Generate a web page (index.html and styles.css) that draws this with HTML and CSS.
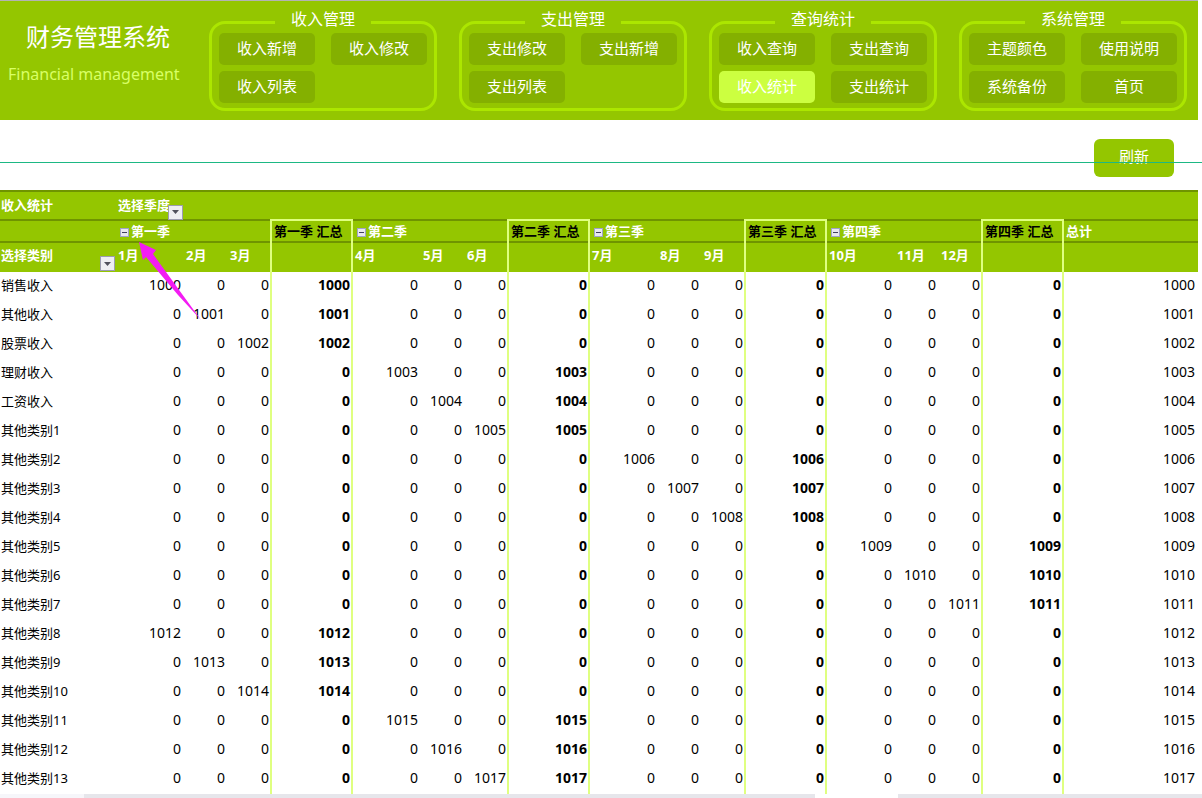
FILE: index.html
```html
<!DOCTYPE html>
<html lang="zh-CN">
<head>
<meta charset="utf-8">
<title>财务管理系统</title>
<link rel="stylesheet" href="styles.css">
</head>
<body>
<header class="banner">
  <div class="brand">
    <h1 class="brand-title">财务管理系统</h1>
    <p class="brand-sub">Financial management</p>
  </div>
  <nav class="menus">
    <fieldset class="menu"><legend>收入管理</legend>
      <button type="button">收入新增</button><button type="button">收入修改</button><button type="button">收入列表</button>
    </fieldset>
    <fieldset class="menu"><legend>支出管理</legend>
      <button type="button">支出修改</button><button type="button">支出新增</button><button type="button">支出列表</button>
    </fieldset>
    <fieldset class="menu"><legend>查询统计</legend>
      <button type="button">收入查询</button><button type="button">支出查询</button><button type="button" class="active">收入统计</button><button type="button">支出统计</button>
    </fieldset>
    <fieldset class="menu"><legend>系统管理</legend>
      <button type="button">主题颜色</button><button type="button">使用说明</button><button type="button">系统备份</button><button type="button">首页</button>
    </fieldset>
  </nav>
</header>
<div class="toolbar">
  <button type="button" class="refresh">刷新</button>
</div>
<main class="sheet">
  <table class="pivot">
    <colgroup>
      <col class="c-name">
      <col class="c-first"><col class="c-month"><col class="c-month"><col class="c-sum">
      <col class="c-first"><col class="c-month"><col class="c-month"><col class="c-sum">
      <col class="c-first"><col class="c-month"><col class="c-month"><col class="c-sum">
      <col class="c-first"><col class="c-month"><col class="c-month"><col class="c-sum">
      <col>
    </colgroup>
    <thead>
      <tr class="h-title">
        <th>收入统计</th>
        <th colspan="17"><span class="pick">选择季度<button type="button" class="drop" aria-label="选择季度"><svg width="7" height="4" viewBox="0 0 7 4"><path d="M0 0h7L3.500 4z"/></svg></button></span></th>
      </tr>
      <tr class="h-quarter">
        <th></th>
        <th colspan="3"><button type="button" class="fold" aria-label="折叠"></button>第一季</th><th class="sum">第一季 汇总</th>
        <th colspan="3"><button type="button" class="fold" aria-label="折叠"></button>第二季</th><th class="sum">第二季 汇总</th>
        <th colspan="3"><button type="button" class="fold" aria-label="折叠"></button>第三季</th><th class="sum">第三季 汇总</th>
        <th colspan="3"><button type="button" class="fold" aria-label="折叠"></button>第四季</th><th class="sum">第四季 汇总</th>
        <th>总计</th>
      </tr>
      <tr class="h-month">
        <th class="category">选择类别<button type="button" class="drop" aria-label="选择类别"><svg width="7" height="4" viewBox="0 0 7 4"><path d="M0 0h7L3.500 4z"/></svg></button></th>
        <th>1月</th><th>2月</th><th>3月</th><th class="sum"></th>
        <th>4月</th><th>5月</th><th>6月</th><th class="sum"></th>
        <th>7月</th><th>8月</th><th>9月</th><th class="sum"></th>
        <th>10月</th><th>11月</th><th>12月</th><th class="sum"></th>
        <th></th>
      </tr>
    </thead>
    <tbody id="rows"></tbody>
  </table>
  <svg class="pointer" width="64" height="78" viewBox="0 0 64 78" aria-hidden="true"><path d="M1 0L18 8L15 12L44 52L63 78L40 53L8 15L5 18z"/></svg>
</main>
<footer class="tabs"><span class="tab-left"></span><span class="tab-fill"></span><span class="tab-current"></span><span class="tab-rest"></span></footer>
<div class="guide"></div>
<script src="rows.js"></script>
</body>
</html>
```
FILE: styles.css
```css
* { box-sizing: border-box; }
body {
  margin: 0;
  position: relative;
  background: #fff;
  color: #000;
  font-family: "Noto Sans", "Noto Sans CJK SC", sans-serif;
  font-size: 13px;
}
button { font: inherit; padding: 0; border: 0; }

.banner {
  display: flex;
  height: 120px;
  margin-right: 4px;
  padding-right: 11px;
  justify-content: space-between;
  background: #94c600;
  color: #fff;
  box-shadow: inset 0 1px #b3b3b3;
}
.brand { padding: 19px 0 0 8px; }
.brand-title {
  margin: 0;
  padding-left: 18px;
  font-size: 24px;
  line-height: 36px;
  font-weight: 400;
}
.brand-sub {
  margin: 7px 0 0;
  font-size: 16px;
  line-height: 24px;
  color: #d9ff66;
}
.menus { display: flex; gap: 22px; padding-top: 11px; }
.menu {
  display: grid;
  grid-template-columns: 96px 96px;
  grid-auto-rows: 32px;
  gap: 6px 16px;
  align-content: start;
  width: 228px;
  height: 100px;
  margin: 0;
  padding: 0 7px 5px;
  border: 3px solid #ace600;
  border-radius: 16px;
}
.menu legend {
  width: 96px;
  margin: 0 auto;
  padding: 0 0 6px;
  font-size: 16px;
  line-height: 16px;
  text-align: center;
}
.menu button {
  padding-bottom: 3px;
  border-radius: 5px;
  background: #84b000;
  color: #fff;
  font-size: 15px;
  line-height: 28px;
}
.menu .active { background: #ccff40; }

.toolbar {
  display: flex;
  justify-content: flex-end;
  height: 70px;
  padding: 19px 28px 0 0;
}
.refresh {
  width: 80px;
  height: 38px;
  padding-bottom: 6px;
  border-radius: 6px;
  background: #94c600;
  color: #fff;
  font-size: 15px;
}

.sheet { position: relative; margin-right: 4px; }
.pivot {
  width: 100%;
  table-layout: fixed;
  border-collapse: collapse;
}
.c-name { width: 115px; }
.c-first { width: 68px; }
.c-month { width: 44px; }
.c-sum { width: 81px; }
.pivot th {
  padding: 0 0 0 3px;
  text-align: left;
  white-space: nowrap;
  line-height: 20px;
}
.pivot th:first-child { padding-left: 1px; }
.pivot thead { background: #94c600; color: #fff; }
.h-title { height: 29px; border-top: 2px solid #6f9400; }
.h-quarter { height: 22px; border-top: 2px solid #6f9400; }
.h-month { height: 30px; border-top: 2px solid #6f9400; }
.pivot .h-title th { padding-bottom: 2px; }
.pivot .h-month th { padding-bottom: 5px; }
.pivot .sum {
  border-left: 2px solid #dfff80;
  border-right: 2px solid #dfff80;
  font-weight: 700;
}
.pivot th.sum { padding-left: 2px; color: #000; }
.pivot .sum + th { padding-left: 2px; }
.h-quarter .sum { border-top: 2px solid #dfff80; }
.pick { position: relative; }
.category { position: relative; }
.drop {
  position: absolute;
  display: grid;
  place-items: center;
  width: 15px;
  height: 15px;
  border: 1px solid #9c9cb0;
  background: #eeeef2;
}
.drop path { fill: #50505c; }
.pick .drop { right: -13px; bottom: -6px; }
.category .drop { right: 0; bottom: 1px; }
.fold {
  width: 9px;
  height: 9px;
  margin: 0 2px;
  vertical-align: 0;
  border: 1px solid #a0a4c8;
  background: linear-gradient(#404060, #404060) center / 5px 1px no-repeat, #e8e8f0;
}
.pivot td, .pivot tbody th {
  height: 29px;
  padding: 0 2px 4px 0;
  font-size: 14px;
  line-height: 20px;
  text-align: right;
}
.pivot td.sum, .pivot td:has(+ .sum) { padding-right: 1px; }
.pivot tbody th {
  padding-left: 1px;
  font-size: 13px;
  font-weight: 400;
  text-align: left;
}
.pivot td:last-child { padding-right: 3px; }
.pointer { position: absolute; left: 138px; top: 52px; fill: #f31cf3; }

.tabs { display: flex; height: 4px; }
.tab-left { width: 84px; background: #f6f6fa; }
.tab-fill { flex: 731; background: #e6e6eb; }
.tab-current { flex: 83; }
.tab-rest { flex: 304; background: #e6e6eb; }
.guide {
  position: absolute;
  left: 0;
  right: 0;
  top: 162px;
  height: 1px;
  background: #1db884;
}
```
FILE: rows.js
```js
const names = ["销售收入", "其他收入", "股票收入", "理财收入", "工资收入"];
for (let n = 1; n <= 13; n++) names.push("其他类别" + n);

const body = document.getElementById("rows");
names.forEach((name, i) => {
  const tr = body.insertRow();
  const head = document.createElement("th");
  head.scope = "row";
  head.textContent = name;
  tr.append(head);
  const amount = 1000 + i;
  const month = i % 12;
  for (let q = 0; q < 4; q++) {
    for (let m = 0; m < 3; m++) tr.insertCell().textContent = q * 3 + m === month ? amount : 0;
    const sum = tr.insertCell();
    sum.className = "sum";
    sum.textContent = Math.floor(month / 3) === q ? amount : 0;
  }
  tr.insertCell().textContent = amount;
});
```
